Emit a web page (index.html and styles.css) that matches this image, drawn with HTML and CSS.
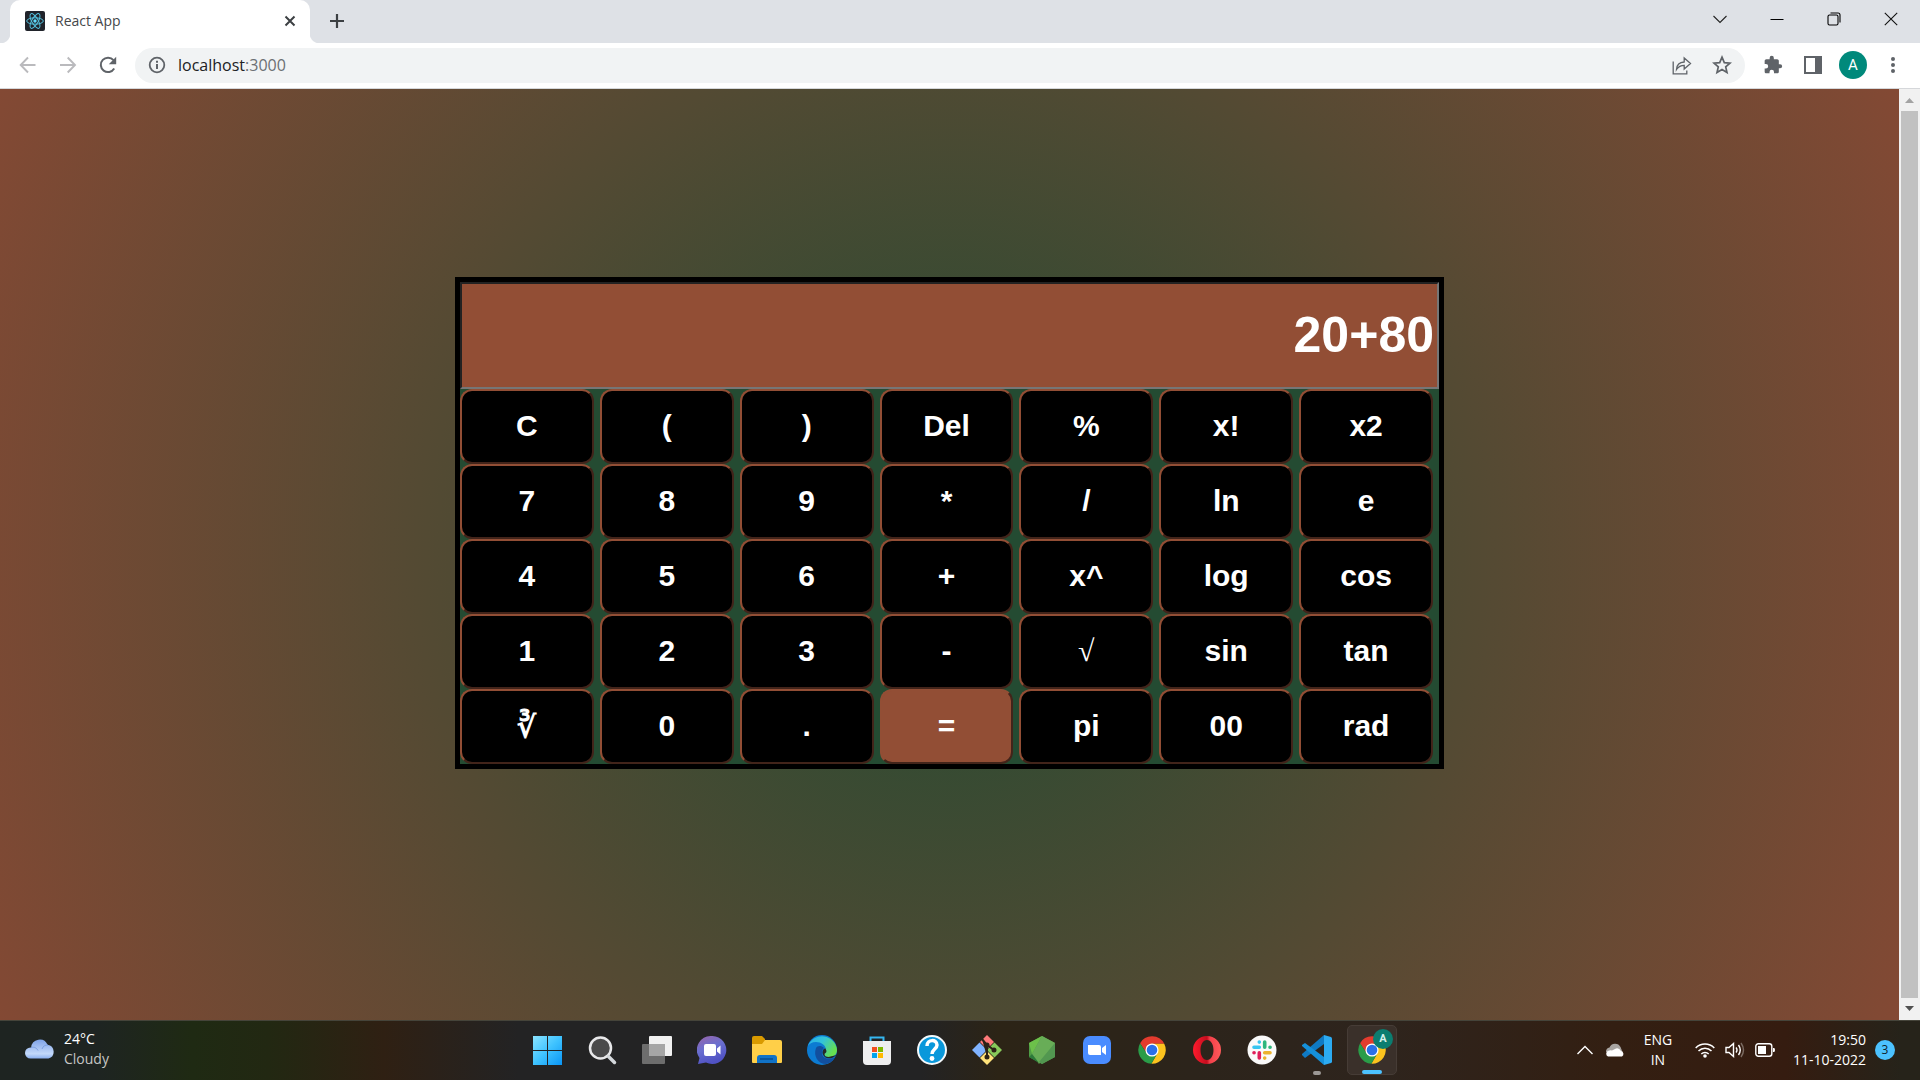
FILE: index.html
```html
<!DOCTYPE html>
<html lang="en">
<head>
<meta charset="utf-8">
<title>React App</title>
<link rel="stylesheet" href="styles.css">
</head>
<body>
<header class="browser">
  <div class="tabstrip">
    <div class="tab">
      <svg class="favicon" viewBox="0 0 20 20"><rect width="20" height="20" rx="2" fill="#20232a"/><g fill="none" stroke="#53c1de" stroke-width="1"><ellipse cx="10" cy="10" rx="8.3" ry="3.2"/><ellipse cx="10" cy="10" rx="8.3" ry="3.2" transform="rotate(60 10 10)"/><ellipse cx="10" cy="10" rx="8.3" ry="3.2" transform="rotate(120 10 10)"/></g><circle cx="10" cy="10" r="1.7" fill="#61dafb"/></svg>
      <span class="tab-title">React App</span>
      <button class="tab-close" aria-label="Close tab"><svg width="12" height="12" viewBox="0 0 12 12"><path d="M1.5 1.5l9 9M10.500 1.500l-9 9" stroke="#3c4043" stroke-width="2"/></svg></button>
    </div>
    <button class="new-tab" aria-label="New tab"><svg width="16" height="16" viewBox="0 0 16 16"><path d="M8 1v14M1 8h14" stroke="#3c4043" stroke-width="2.200"/></svg></button>
    <div class="window-controls">
      <button aria-label="Search tabs"><svg width="14" height="14" viewBox="0 0 14 14"><path d="M.5 4L7 10.500 13.500 4" fill="none" stroke="#222" stroke-width="1.100"/></svg></button>
      <button aria-label="Minimize"><svg width="14" height="14" viewBox="0 0 14 14"><path d="M.5 7.500h13" stroke="#000"/></svg></button>
      <button aria-label="Restore"><svg width="14" height="14" viewBox="0 0 14 14"><g fill="none" stroke="#000" stroke-width="1.100"><rect x="1" y="3" width="10" height="10" rx="1.500"/><path d="M3.500 1h7.500q2 0 2 2v7.500"/></g></svg></button>
      <button aria-label="Close"><svg width="14" height="14" viewBox="0 0 14 14"><path d="M.8.8l12.400 12.400M13.200.8L.8 13.200" stroke="#111" stroke-width="1.100"/></svg></button>
    </div>
  </div>
  <div class="toolbar">
    <button class="tool" aria-label="Back"><svg width="20" height="20" viewBox="0 0 20 20"><path d="M17.500 10H3M10 2.500L2.700 10l7.300 7.500" fill="none" stroke="#bababd" stroke-width="1.900"/></svg></button>
    <button class="tool" aria-label="Forward"><svg width="20" height="20" viewBox="0 0 20 20"><path d="M2 10h14.500M9.700 2.500L17 10l-7.300 7.500" fill="none" stroke="#bababd" stroke-width="1.900"/></svg></button>
    <button class="tool" aria-label="Reload"><svg width="20" height="20" viewBox="0 0 20 20"><path d="M16.200 13.500A7.200 7.200 0 1 1 15.500 5.200" fill="none" stroke="#5f6368" stroke-width="2"/><path d="M18.200 1.800v7.400h-7.400z" fill="#5f6368"/></svg></button>
    <div class="omnibox">
      <svg width="18" height="18" viewBox="0 0 18 18"><circle cx="9" cy="9" r="7.300" fill="none" stroke="#5f6368" stroke-width="1.800"/><path d="M9 8v5M9 4.700v2" stroke="#5f6368" stroke-width="2"/></svg>
      <a class="url" href="#"><span class="host">localhost</span>:3000</a>
      <button aria-label="Share"><svg width="20" height="20" viewBox="0 0 20 20"><path d="M1.200 6.500v12.300h13.600v-3.300M4.500 14.500c.3-4.500 3-7.300 7.700-7.500V3L18.500 8.500 12.200 14v-3.700c-3.200 0-5.700 1.200-7.700 4.200z" fill="none" stroke="#5f6368" stroke-width="1.300"/></svg></button>
      <button aria-label="Bookmark"><svg width="20" height="20" viewBox="0 0 20 20"><path d="M10 2.200l2.300 5.400 5.700.5-4.300 3.800 1.300 5.700-5-3-5 3 1.300-5.700L2 8.100l5.700-.5z" fill="none" stroke="#5f6368" stroke-width="1.700"/></svg></button>
    </div>
    <button class="tool" aria-label="Extensions"><svg width="20" height="20" viewBox="0 0 24 24"><path d="M20.500 11H19V7c0-1.100-.9-2-2-2h-4V3.500a2.500 2.500 0 0 0-5 0V5H4c-1.100 0-2 .9-2 2v3.800h1.500a2.700 2.700 0 0 1 0 5.400H2V20c0 1.100.9 2 2 2h3.800v-1.500a2.700 2.700 0 0 1 5.400 0V22H17c1.100 0 2-.9 2-2v-4h1.500a2.500 2.500 0 0 0 0-5z" fill="#5f6368"/></svg></button>
    <button class="tool" aria-label="Side panel"><svg width="18" height="18" viewBox="0 0 18 18"><path fill="#5f6368" fill-rule="evenodd" d="M0 0h18v18H0zM2 2v14h9V2z"/></svg></button>
    <button class="tool avatar" aria-label="Profile">A</button>
    <button class="tool" aria-label="Menu"><svg width="6" height="18" viewBox="0 0 6 18"><g fill="#5f6368"><circle cx="3" cy="3" r="2"/><circle cx="3" cy="9" r="2"/><circle cx="3" cy="15" r="2"/></g></svg></button>
  </div>
</header>

<div class="viewport">
  <main class="page">
    <form class="calculator">
      <input class="display" type="text" aria-label="Expression" value="20+80">
      <div class="keys">
        <button type="button">C</button><button type="button">(</button><button type="button">)</button><button type="button">Del</button><button type="button">%</button><button type="button">x!</button><button type="button">x2</button>
        <button type="button">7</button><button type="button">8</button><button type="button">9</button><button type="button">*</button><button type="button">/</button><button type="button">ln</button><button type="button">e</button>
        <button type="button">4</button><button type="button">5</button><button type="button">6</button><button type="button">+</button><button type="button">x^</button><button type="button">log</button><button type="button">cos</button>
        <button type="button">1</button><button type="button">2</button><button type="button">3</button><button type="button">-</button><button type="button" class="root">√</button><button type="button">sin</button><button type="button">tan</button>
        <button type="button">∛</button><button type="button">0</button><button type="button">.</button><button type="button" class="equals">=</button><button type="button">pi</button><button type="button">00</button><button type="button">rad</button>
      </div>
    </form>
  </main>
  <div class="scrollbar">
    <svg width="9" height="5" viewBox="0 0 9 5"><path d="M0 5L4.500 0 9 5z" fill="#a3a3a3"/></svg>
    <div class="thumb"></div>
    <svg width="9" height="5" viewBox="0 0 9 5"><path d="M0 0l4.500 5L9 0z" fill="#505050"/></svg>
  </div>
</div>

<footer class="taskbar">
  <div class="weather">
    <svg width="30" height="20" viewBox="0 0 30 20"><defs><linearGradient id="cl" x1="0" y1="0" x2="0" y2="1"><stop offset="0" stop-color="#7fa3e8"/><stop offset=".75" stop-color="#c3d9fa"/><stop offset="1" stop-color="#8bb0f0"/></linearGradient></defs><path d="M5.500 19.500a5.500 5.500 0 0 1 0-11h.7a8.500 8.500 0 0 1 16.300-2.700 7 7 0 0 1 1 13.700z" fill="url(#cl)"/><path d="M6 8.500c4-1 6 1 7 3M17 10c1-3 3-4 6-4" fill="none" stroke="#7b9fe2" stroke-width="1"/></svg>
    <div class="two-line"><span>24°C</span><span class="dim">Cloudy</span></div>
  </div>

  <nav class="apps">
    <button aria-label="Start"><svg viewBox="0 0 30 30"><defs><linearGradient id="win" x1="0" y1="0" x2="1" y2="1"><stop offset="0" stop-color="#8be4ff"/><stop offset=".5" stop-color="#3fc3ff"/><stop offset="1" stop-color="#0a95f5"/></linearGradient></defs><path fill="url(#win)" d="M1 1h14v14H1zM16 1h14v14H16zM1 16h14v14H1zM16 16h14v14H16z"/></svg></button>
    <button aria-label="Search"><svg viewBox="0 0 30 30"><circle cx="13.500" cy="13" r="10.500" fill="#4a4a4b" stroke="#e8e8ea" stroke-width="2.500"/><path d="M21.500 21.500l6 6" stroke="#d4d8dc" stroke-width="3.500" stroke-linecap="round"/></svg></button>
    <button aria-label="Task view"><svg viewBox="0 0 30 30"><rect x="7" y="1" width="23" height="20" rx="1" fill="#f1f1f1"/><rect x="0" y="9" width="23" height="20" rx="1" fill="#6d6d6d"/><path d="M7 9h16v12H7z" fill="#a6a6a6"/></svg></button>
    <button aria-label="Chat"><svg viewBox="0 0 30 30"><defs><linearGradient id="chat" x1="0" y1="0" x2=".4" y2="1"><stop offset="0" stop-color="#9a64a8"/><stop offset=".5" stop-color="#6a6fd0"/><stop offset="1" stop-color="#5052c4"/></linearGradient></defs><path fill="url(#chat)" d="M15.500 1a14 14 0 1 1-6.500 26.500L1 29l1.500-6A14 14 0 0 1 15.500 1z"/><rect x="7" y="9" width="12" height="12" rx="2" fill="#fff"/><path d="M20 13.500l3.500-3v9l-3.500-3z" fill="#fff"/></svg></button>
    <button aria-label="File Explorer"><svg viewBox="0 0 30 30"><path d="M0 3q0-2 2-2h8l3 3v6H0z" fill="#d99a00"/><path d="M0 9h10l3-4h15q2 0 2 2v20q0 1-1 1H1q-1 0-1-1z" fill="#ffcf48"/><path d="M5 28v-5q0-3 3-3h14q3 0 3 3v5z" fill="#1173c8"/><path d="M8 24h13" stroke="#074c91" stroke-width="1.500"/></svg></button>
    <button aria-label="Edge"><svg viewBox="0 0 30 30"><defs><linearGradient id="ed" x1="0" y1="0" x2="1" y2=".5"><stop offset="0" stop-color="#27aee8"/><stop offset=".5" stop-color="#34c3d8"/><stop offset="1" stop-color="#66df50"/></linearGradient></defs><circle cx="15" cy="15" r="15" fill="#0c7bd2"/><path d="M1 11A15 15 0 0 1 30 15c0 5-4 7-8 7-3 0-5-1-5-3 0-1 2-1 2-4 0-5-5-8-10-8-4 0-7 2-8 4z" fill="url(#ed)"/><path d="M9 13c-3 8 2 16 10 16 4-1 7-3 9-7-6 4-14 1-13-5 0-2 1-3 2-4-3-3-7-2-8 0z" fill="#124f9e"/><path d="M18.500 13.500c-2 0-3 2-3 4 0 5 7 8 12 4l2-.5-3 4 4-5-9 2c-3 0-4-1-4-3 0-1 2-1 2-3z" fill="#262728"/></svg></button>
    <button aria-label="Store"><svg viewBox="0 0 30 30"><path d="M8.500 7V2.500h13V7" fill="none" stroke="#35b6f0" stroke-width="2"/><path d="M1 6h28v20q0 4-4 4H5q-4 0-4-4z" fill="#eeeeef"/><path d="M10 12h5v5h-5z" fill="#f25022"/><path d="M16 12h5v5h-5z" fill="#7fba00"/><path d="M10 18h5v5h-5z" fill="#00a4ef"/><path d="M16 18h5v5h-5z" fill="#ffb900"/></svg></button>
    <button aria-label="Get Help"><svg viewBox="0 0 30 30"><circle cx="15" cy="15" r="14" fill="#0a98db" stroke="#f4f9fc" stroke-width="2"/><path d="M10 11c0-7 10-7 10-1 0 4-5 4-5 9" fill="none" stroke="#fff" stroke-width="3.500"/><circle cx="15" cy="23.500" r="2.400" fill="#fff"/></svg></button>
    <button aria-label="Git"><svg viewBox="0 0 30 30"><path d="M15 0l7 7-7 7-7-7z" fill="#ff7a7a"/><path d="M7.500 7.500L15 15l-7.500 7.500L0 15z" fill="#80b3ff"/><path d="M22.500 7.500L30 15l-7.500 7.500L15 15z" fill="#87c95a"/><path d="M15 16l7 7-7 7-7-7z" fill="#ffe27a"/><g stroke="#2c2216" stroke-width="2" fill="#2c2216"><path d="M10 4l5 6v12M15 10l7 5"/><circle cx="15" cy="10" r="1.500"/><circle cx="15" cy="22" r="1.500"/><circle cx="22" cy="15" r="1.500"/></g></svg></button>
    <button aria-label="Node.js"><svg viewBox="0 0 30 30"><path d="M15 1l13 7v14l-13 7-13-7V8z" fill="#4f9c45"/><path d="M15 1L2 8l3 11z" fill="#6cc04a"/><path d="M15 1l13 7-16 21-7-10z" fill="#68ad57"/><path d="M5 19l7 9-10-6z" fill="#2c7a3a"/><path d="M28 8v14l-13 7-3-2z" fill="#529750"/></svg></button>
    <button aria-label="Zoom"><svg viewBox="0 0 30 30"><rect x="1" y="1" width="28" height="28" rx="7" fill="#4a8cff"/><path d="M6 10h11q2 0 2 2v8H8q-2 0-2-2zM20 13l4-3v10l-4-3z" fill="#fff"/></svg></button>
    <button aria-label="Chrome"><svg viewBox="0 0 48 48"><g id="chrome"><path d="M24 14h19.600A22 22 0 0 0 4.950 13l10.390 16z" fill="#e33b2e"/><path d="M24 14h19.600A22 22 0 0 1 23 46l9.660-17z" fill="#fcc31e"/><path d="M32.660 29L23 46A22 22 0 0 1 4.950 13l10.390 16z" fill="#2a9c48"/><circle cx="24" cy="24" r="10.500" fill="#fff"/><circle cx="24" cy="24" r="8.500" fill="#2b70e8"/></g></svg></button>
    <button aria-label="Opera"><svg viewBox="0 0 30 30"><defs><linearGradient id="op"><stop offset="0" stop-color="#ff1b2d"/><stop offset=".5" stop-color="#c40d1e"/><stop offset=".6" stop-color="#f2404a"/><stop offset="1" stop-color="#ff5a5a"/></linearGradient></defs><path fill="url(#op)" fill-rule="evenodd" d="M15 1a14 14 0 1 0 0 28 14 14 0 1 0 0-28zm0 4c4 0 6.500 4.500 6.500 10S19 25 15 25 8.500 20.500 8.500 15 11 5 15 5z"/></svg></button>
    <button aria-label="Slack"><svg viewBox="0 0 30 30"><circle cx="15" cy="15" r="14.500" fill="#fafafa"/><g stroke-width="3.600" stroke-linecap="round"><path d="M12.300 12.300H7M12.300 7v.1" stroke="#36c5f0"/><path d="M17.700 12.300V7M23 12.300h.1" stroke="#2eb67d"/><path d="M17.700 17.700H23M17.700 23v.1" stroke="#ecb22e"/><path d="M12.300 17.700V23M7 17.700h.1" stroke="#e01e5a"/></g></svg></button>
    <button class="running" aria-label="Visual Studio Code"><svg viewBox="0 0 30 30"><path d="M22 0v9L3 23l-3-3v-1z" fill="#0f7ac4"/><path d="M3 8l19 14v8L0 11v-1z" fill="#1590da"/><path d="M22 0l7 2q1 .5 1 1.500v23q0 1-1 1.500l-7 2z" fill="#2cabf2"/></svg></button>
    <button class="running active" aria-label="Chrome, profile A"><svg viewBox="0 0 48 48"><use href="#chrome"/></svg><span class="profile">A</span></button>
  </nav>

  <div class="tray">
    <svg width="16" height="10" viewBox="0 0 16 10"><path d="M.5 9L8 1.500 15.500 9" fill="none" stroke="#fff" stroke-width="1.400"/></svg>
    <svg width="20" height="14" viewBox="0 0 20 14"><path d="M1 9a4 4 0 0 1 3.500-4.500 6 6 0 0 1 11-.5l2 5z" fill="#a9a5a2"/><path d="M3 13.500a3 3 0 0 1 0-5.500q2-1 4-.5l4-2q3-1 5 2.500a3 3 0 0 1 1 5.500z" fill="#fff"/></svg>
    <div class="two-line lang"><span>ENG</span><span>IN</span></div>
    <div class="status">
      <svg width="20" height="16" viewBox="0 0 20 16"><g fill="none" stroke="#fff" stroke-width="1.500"><path d="M.7 6a13 13 0 0 1 18.600 0M3.500 9a9 9 0 0 1 13 0M6.300 12a5.300 5.300 0 0 1 7.400 0"/></g><circle cx="10" cy="14" r="1.800" fill="#fff"/></svg>
      <svg width="20" height="16" viewBox="0 0 20 16"><g fill="none" stroke="#fff" stroke-width="1.400"><path d="M1 5.500h3L8.500 1.500v13L4 10.500H1zM11 5.500q2 2.500 0 5M13.500 3q3.500 5 0 10"/><path d="M16 1q5 7 0 14" stroke="#7b6b62"/></g></svg>
      <svg width="20" height="14" viewBox="0 0 20 14"><rect x=".8" y=".8" width="16" height="12.400" rx="2.500" fill="none" stroke="#fff" stroke-width="1.400"/><rect x="3" y="3" width="8" height="8" fill="#fff"/><path d="M18 5h1q1 0 1 2t-1 2h-1z" fill="#fff"/></svg>
    </div>
    <div class="two-line clock"><span>19:50</span><span>11-10-2022</span></div>
    <span class="count">3</span>
  </div>
</footer>
</body>
</html>
```
FILE: styles.css
```css
* {
  box-sizing: border-box;
}

body {
  display: flex;
  flex-direction: column;
  min-height: 100vh;
  margin: 0;
  font-family: "Open Sans", "Noto Sans", sans-serif;
}

button {
  margin: 0;
  padding: 0;
  border: 0;
  background: none;
  font: inherit;
}

svg {
  display: block;
  flex: none;
}

/* Browser frame */
.tabstrip {
  display: flex;
  height: 43px;
  padding: 0 1px 0 10px;
  background: #dee1e6;
}

.tab {
  position: relative;
  display: flex;
  align-items: center;
  gap: 10px;
  width: 300px;
  padding: 0 14px 2px 15px;
  border-radius: 10px 10px 0 0;
  background: #fff;
}

.tab::before,
.tab::after {
  content: "";
  position: absolute;
  bottom: 0;
  width: 10px;
  height: 10px;
}

.tab::before {
  right: 100%;
  background: radial-gradient(circle at 0 0, #dee1e6 10px, #fff 11px);
}

.tab::after {
  left: 100%;
  background: radial-gradient(circle at 100% 0, #dee1e6 10px, #fff 11px);
}

.favicon {
  width: 20px;
  height: 20px;
}

.tab-title {
  flex: 1;
  color: #45474a;
  font-size: 14px;
}

.new-tab {
  width: 54px;
  display: grid;
  place-items: center;
  padding-bottom: 2px;
}

.window-controls {
  display: flex;
  margin-left: auto;
  height: 37px;
}

.window-controls button {
  display: grid;
  place-items: center;
  width: 57px;
}

.toolbar {
  display: flex;
  align-items: center;
  gap: 20px;
  height: 46px;
  padding: 0 17px 1px 18px;
  border-bottom: 1px solid #d5d7da;
  background: #fff;
}

.tool {
  display: grid;
  flex: none;
  place-items: center;
  width: 20px;
}

.omnibox {
  display: flex;
  flex: 1;
  align-items: center;
  gap: 20px;
  height: 35px;
  margin: 0 -2px 0 -3px;
  padding: 0 13px;
  border-radius: 18px;
  background: #f1f3f4;
}

.url {
  flex: 1;
  margin-left: -8px;
  color: #6b6f73;
  font-size: 16px;
  text-decoration: none;
}

.host {
  color: #202124;
}

.avatar {
  width: 28px;
  height: 28px;
  margin: 0 -4px;
  border-radius: 50%;
  background: #00897b;
  color: #fff;
  font-family: Roboto, sans-serif;
  font-size: 15px;
}

/* Page */
.viewport {
  display: flex;
  flex: 1;
}

.page {
  display: flex;
  flex: 1;
  align-items: center;
  justify-content: center;
  padding-bottom: 64px;
  background: radial-gradient(circle, #244b32, #834934);
}

.calculator {
  width: 989px;
  max-width: 100%;
  border: 5px solid #000;
  background: #244b32;
}

.display {
  display: block;
  width: 100%;
  height: 107px;
  padding: 0 3px;
  border: 2px solid;
  border-color: #222 #767676 #767676 #222;
  border-radius: 0;
  background: #924e35;
  color: #fff;
  font: bold 50px "Liberation Sans", Arial, sans-serif;
  text-align: right;
}

.keys {
  display: grid;
  grid-template-columns: repeat(7, 1fr);
  column-gap: 6px;
  padding-right: 6px;
}

.keys button {
  height: 75px;
  border: 2px solid;
  border-color: #924e35 #42241a #42241a #924e35;
  border-radius: 12px;
  background: #000;
  color: #fff;
  font: bold 30px "Liberation Sans", Arial, sans-serif;
}

.keys .root {
  font-family: "Liberation Serif", serif;
  font-weight: normal;
}

.keys .equals {
  background: #924e35;
}

.scrollbar {
  display: flex;
  flex-direction: column;
  align-items: center;
  gap: 8px;
  width: 21px;
  padding: 9px 0;
  background: #f1f1f1;
}

.thumb {
  flex: 1;
  width: 17px;
  background: #c1c1c1;
}

/* Taskbar */
.taskbar {
  display: grid;
  grid-template-columns: 1fr auto 1fr;
  align-items: center;
  height: 60px;
  padding: 0 1px 1px 0;
  border-top: 1px solid #45443a;
  background: linear-gradient(90deg, #1e2421 0%, #1e2422 5%, #1f2a13 10%, #222812 14%, #2f2013 20%, #232324 27%, #232324 48%, #2c2416 52%, #2c241b 62%, #2e241d 72%, #331f12 84%, #351c10 93%, #26231a 99%);
  color: #fff;
  font-size: 14px;
  line-height: 20px;
}

.weather {
  display: flex;
  align-items: center;
  gap: 9px;
  padding: 0 0 2px 25px;
}

.two-line {
  display: flex;
  flex-direction: column;
}

.dim {
  color: #c6c6c4;
}

.apps {
  display: flex;
  gap: 5px;
}

.apps button {
  position: relative;
  display: grid;
  place-items: center;
  width: 50px;
  height: 50px;
  border-radius: 5px;
}

.apps svg {
  width: 30px;
  height: 30px;
}

.apps .active {
  border: 1px solid #463c36;
  background: #3a302a;
}

.running::after {
  content: "";
  position: absolute;
  bottom: 0;
  left: 50%;
  width: 8px;
  height: 4px;
  margin-left: -4px;
  border-radius: 2px;
  background: #9c9895;
}

.active::after {
  width: 20px;
  margin-left: -10px;
  background: #4cc2ff;
}

.profile {
  position: absolute;
  top: 3px;
  right: 3px;
  width: 20px;
  height: 20px;
  border-radius: 50%;
  background: #0b7d70;
  color: #d5efeb;
  font: bold 11px/20px Roboto, sans-serif;
  text-align: center;
}

.tray {
  display: flex;
  align-items: center;
  justify-content: flex-end;
  padding: 0 24px 1px 0;
}

.tray > svg {
  margin-right: 12px;
}

.lang {
  align-items: center;
  width: 42px;
  margin-right: 16px;
}

.status {
  display: flex;
  align-items: center;
  gap: 10px;
  margin-right: 18px;
}

.clock {
  align-items: flex-end;
  margin-right: 9px;
}

.count {
  width: 20px;
  height: 20px;
  border-radius: 50%;
  background: #4cc2ff;
  color: #10222c;
  font-size: 12px;
  text-align: center;
}
```
